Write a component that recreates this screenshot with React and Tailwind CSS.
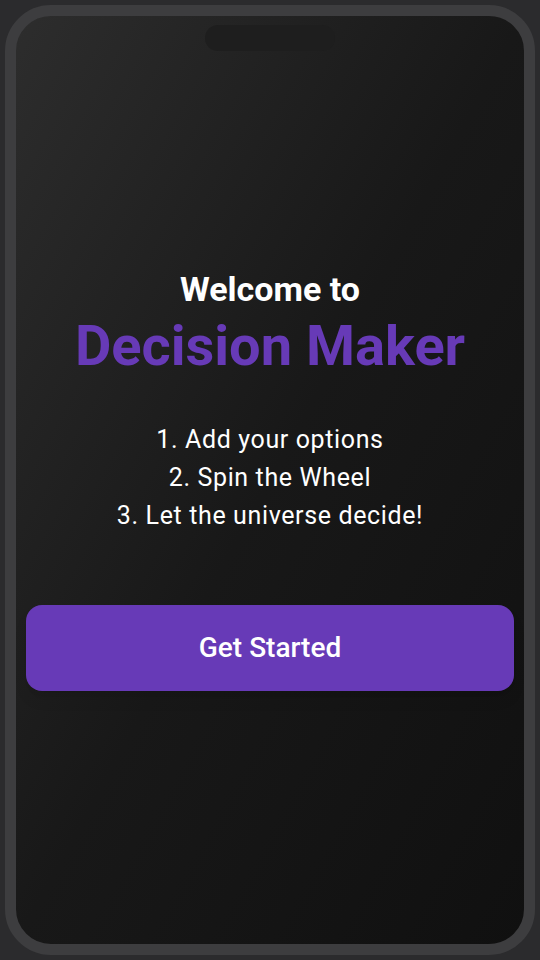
export default function App() {
  return (
    <div className="h-[960px] w-[540px] bg-[#2b2b2d] p-[5px] font-['Roboto',sans-serif]">
      <div className="flex h-full flex-col items-center overflow-hidden rounded-[46px] border-[11px] border-[#3d3d3f] bg-gradient-to-br from-[#2d2d2d] via-[#181818] to-[#101010] px-[10px]">
        <div className="mt-[9px] h-[26px] w-[130px] rounded-full bg-[#1e1e1e]" />

        <h2 className="mt-[218px] text-[34px] font-bold leading-[40px] text-white">Welcome to</h2>
        <h1 className="mt-[5px] text-[56px] font-bold leading-[64px] text-[#673ab7]">Decision Maker</h1>

        <div className="mt-[43px] text-center text-[25px] leading-[38px] tracking-wide text-white">
          <p>1. Add your options</p>
          <p>2. Spin the Wheel</p>
          <p>3. Let the universe decide!</p>
        </div>

        <button className="mt-[70px] h-[86px] w-full rounded-[16px] bg-[#673ab7] text-[28px] font-medium text-white shadow-lg">
          Get Started
        </button>
      </div>
    </div>
  );
}
